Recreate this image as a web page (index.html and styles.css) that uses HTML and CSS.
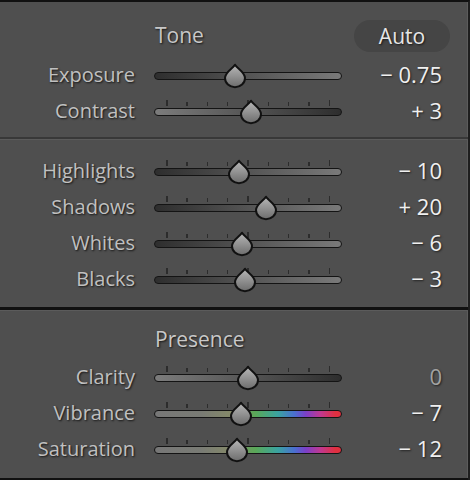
FILE: index.html
```html
<!DOCTYPE html>
<html>
<head>
<meta charset="utf-8">
<link rel="stylesheet" href="styles.css">
</head>
<body>
<div class="panel">
  <section class="sec sec-tone">
    <div class="title-row">
      <span class="title">Tone</span>
      <span class="auto">Auto</span>
    </div>
    <div class="row">
      <span class="label">Exposure</span>
      <div class="slider">
        <div class="ticks none"></div>
        <div class="track tr-dark-light"></div>
        <svg class="thumb" style="left:81px" viewBox="0 0 24 25" width="24" height="25"><defs><linearGradient id="t1" x1="0" y1="0" x2="0" y2="1"><stop offset="0" stop-color="#b8b8b8"/><stop offset="1" stop-color="#6c6c6c"/></linearGradient></defs><path d="M12,1.2 C14,4.8 22,8.5 22,14.5 A10,9.3 0 0 1 2,14.5 C2,8.5 10,4.8 12,1.2 Z" fill="url(#t1)" stroke="#111" stroke-width="2" stroke-linejoin="round"/></svg>
      </div>
      <span class="value">− 0.75</span>
    </div>
    <div class="row">
      <span class="label">Contrast</span>
      <div class="slider">
        <div class="ticks"><i class="big"></i><i></i><i></i><i></i><i class="big"></i><i></i><i></i><i></i><i class="big"></i></div>
        <div class="track tr-light-dark"></div>
        <svg class="thumb" style="left:97px" viewBox="0 0 24 25" width="24" height="25"><defs><linearGradient id="t2" x1="0" y1="0" x2="0" y2="1"><stop offset="0" stop-color="#b8b8b8"/><stop offset="1" stop-color="#6c6c6c"/></linearGradient></defs><path d="M12,1.2 C14,4.8 22,8.5 22,14.5 A10,9.3 0 0 1 2,14.5 C2,8.5 10,4.8 12,1.2 Z" fill="url(#t2)" stroke="#111" stroke-width="2" stroke-linejoin="round"/></svg>
      </div>
      <span class="value">+ 3</span>
    </div>
  </section>

  <section class="sec sec-mid">
    <div class="row">
      <span class="label">Highlights</span>
      <div class="slider">
        <div class="ticks"><i class="big"></i><i></i><i></i><i></i><i class="big"></i><i></i><i></i><i></i><i class="big"></i></div>
        <div class="track tr-dark-light"></div>
        <svg class="thumb" style="left:84.6px" viewBox="0 0 24 25" width="24" height="25"><defs><linearGradient id="t3" x1="0" y1="0" x2="0" y2="1"><stop offset="0" stop-color="#b8b8b8"/><stop offset="1" stop-color="#6c6c6c"/></linearGradient></defs><path d="M12,1.2 C14,4.8 22,8.5 22,14.5 A10,9.3 0 0 1 2,14.5 C2,8.5 10,4.8 12,1.2 Z" fill="url(#t3)" stroke="#111" stroke-width="2" stroke-linejoin="round"/></svg>
      </div>
      <span class="value">− 10</span>
    </div>
    <div class="row">
      <span class="label">Shadows</span>
      <div class="slider">
        <div class="ticks"><i class="big"></i><i></i><i></i><i></i><i class="big"></i><i></i><i></i><i></i><i class="big"></i></div>
        <div class="track tr-dark-light"></div>
        <svg class="thumb" style="left:112px" viewBox="0 0 24 25" width="24" height="25"><defs><linearGradient id="t4" x1="0" y1="0" x2="0" y2="1"><stop offset="0" stop-color="#b8b8b8"/><stop offset="1" stop-color="#6c6c6c"/></linearGradient></defs><path d="M12,1.2 C14,4.8 22,8.5 22,14.5 A10,9.3 0 0 1 2,14.5 C2,8.5 10,4.8 12,1.2 Z" fill="url(#t4)" stroke="#111" stroke-width="2" stroke-linejoin="round"/></svg>
      </div>
      <span class="value">+ 20</span>
    </div>
    <div class="row">
      <span class="label">Whites</span>
      <div class="slider">
        <div class="ticks"><i class="big"></i><i></i><i></i><i></i><i class="big"></i><i></i><i></i><i></i><i class="big"></i></div>
        <div class="track tr-dark-light"></div>
        <svg class="thumb" style="left:88.4px" viewBox="0 0 24 25" width="24" height="25"><defs><linearGradient id="t5" x1="0" y1="0" x2="0" y2="1"><stop offset="0" stop-color="#b8b8b8"/><stop offset="1" stop-color="#6c6c6c"/></linearGradient></defs><path d="M12,1.2 C14,4.8 22,8.5 22,14.5 A10,9.3 0 0 1 2,14.5 C2,8.5 10,4.8 12,1.2 Z" fill="url(#t5)" stroke="#111" stroke-width="2" stroke-linejoin="round"/></svg>
      </div>
      <span class="value">− 6</span>
    </div>
    <div class="row">
      <span class="label">Blacks</span>
      <div class="slider">
        <div class="ticks"><i class="big"></i><i></i><i></i><i></i><i class="big"></i><i></i><i></i><i></i><i class="big"></i></div>
        <div class="track tr-dark-light"></div>
        <svg class="thumb" style="left:91.2px" viewBox="0 0 24 25" width="24" height="25"><defs><linearGradient id="t6" x1="0" y1="0" x2="0" y2="1"><stop offset="0" stop-color="#b8b8b8"/><stop offset="1" stop-color="#6c6c6c"/></linearGradient></defs><path d="M12,1.2 C14,4.8 22,8.5 22,14.5 A10,9.3 0 0 1 2,14.5 C2,8.5 10,4.8 12,1.2 Z" fill="url(#t6)" stroke="#111" stroke-width="2" stroke-linejoin="round"/></svg>
      </div>
      <span class="value">− 3</span>
    </div>
  </section>

  <section class="sec sec-presence">
    <div class="title-row">
      <span class="title">Presence</span>
    </div>
    <div class="row">
      <span class="label">Clarity</span>
      <div class="slider">
        <div class="ticks"><i class="big"></i><i></i><i></i><i></i><i class="big"></i><i></i><i></i><i></i><i class="big"></i></div>
        <div class="track tr-light-dark"></div>
        <svg class="thumb" style="left:94px" viewBox="0 0 24 25" width="24" height="25"><defs><linearGradient id="t7" x1="0" y1="0" x2="0" y2="1"><stop offset="0" stop-color="#b8b8b8"/><stop offset="1" stop-color="#6c6c6c"/></linearGradient></defs><path d="M12,1.2 C14,4.8 22,8.5 22,14.5 A10,9.3 0 0 1 2,14.5 C2,8.5 10,4.8 12,1.2 Z" fill="url(#t7)" stroke="#111" stroke-width="2" stroke-linejoin="round"/></svg>
      </div>
      <span class="value dim">0</span>
    </div>
    <div class="row">
      <span class="label">Vibrance</span>
      <div class="slider">
        <div class="ticks"><i class="big"></i><i></i><i></i><i></i><i class="big"></i><i></i><i></i><i></i><i class="big"></i></div>
        <div class="track tr-color"></div>
        <svg class="thumb" style="left:87.4px" viewBox="0 0 24 25" width="24" height="25"><defs><linearGradient id="t8" x1="0" y1="0" x2="0" y2="1"><stop offset="0" stop-color="#b8b8b8"/><stop offset="1" stop-color="#6c6c6c"/></linearGradient></defs><path d="M12,1.2 C14,4.8 22,8.5 22,14.5 A10,9.3 0 0 1 2,14.5 C2,8.5 10,4.8 12,1.2 Z" fill="url(#t8)" stroke="#111" stroke-width="2" stroke-linejoin="round"/></svg>
      </div>
      <span class="value">− 7</span>
    </div>
    <div class="row">
      <span class="label">Saturation</span>
      <div class="slider">
        <div class="ticks"><i class="big"></i><i></i><i></i><i></i><i class="big"></i><i></i><i></i><i></i><i class="big"></i></div>
        <div class="track tr-color"></div>
        <svg class="thumb" style="left:82.7px" viewBox="0 0 24 25" width="24" height="25"><defs><linearGradient id="t9" x1="0" y1="0" x2="0" y2="1"><stop offset="0" stop-color="#b8b8b8"/><stop offset="1" stop-color="#6c6c6c"/></linearGradient></defs><path d="M12,1.2 C14,4.8 22,8.5 22,14.5 A10,9.3 0 0 1 2,14.5 C2,8.5 10,4.8 12,1.2 Z" fill="url(#t9)" stroke="#111" stroke-width="2" stroke-linejoin="round"/></svg>
      </div>
      <span class="value">− 12</span>
    </div>
  </section>
</div>
</body>
</html>
```

FILE: styles.css
```css
html, body {
  margin: 0;
  padding: 0;
  background: #4f4f4f;
}
body {
  font-family: "Open Sans", "Liberation Sans", sans-serif;
  font-size: 20px;
  color: #c2c2c2;
}
.panel {
  width: 470px;
  height: 480px;
  box-sizing: border-box;
  background: #4f4f4f;
  border-top: 2px solid #111;
  border-right: 2px solid #1e1e1e;
  box-shadow: inset -1px 0 0 #5c5c5c;
  display: flex;
  flex-direction: column;
}
.sec {
  display: flex;
  flex-direction: column;
}
.sec-tone {
  padding-bottom: 7px;
  border-bottom: 2px solid #383838;
}
.sec-mid {
  border-top: 1px solid #5b5b5b;
  padding-top: 14px;
  padding-bottom: 9px;
  border-bottom: 3px solid #111;
}
.sec-presence {
  border-top: 1px solid #5b5b5b;
  flex: 1;
  border-bottom: 2px solid #111;
}
.sec-tone .title-row {
  padding-top: 12px;
  height: 44px;
}
.sec-presence .title-row {
  padding-top: 9px;
  height: 40px;
}
.title-row {
  display: flex;
  align-items: center;
  padding-left: 155px;
  padding-right: 18px;
}
.title {
  flex: 1;
  font-size: 21px;
  color: #c8c8c8;
  text-shadow: 1px 1px 2px rgba(0, 0, 0, 0.75);
  padding-bottom: 2px;
}
.auto {
  width: 96px;
  height: 32px;
  border-radius: 16px;
  background: #454545;
  color: #e6e6e6;
  font-size: 21px;
  display: flex;
  align-items: center;
  justify-content: center;
  text-shadow: 1px 1px 2px rgba(0, 0, 0, 0.7);
  box-sizing: border-box;
  padding-bottom: 1px;
}
.row {
  height: 36px;
  display: flex;
  align-items: center;
}
.label {
  width: 135px;
  text-align: right;
  color: #c0c0c0;
  text-shadow: 1px 1px 2px rgba(0, 0, 0, 0.75);
  padding-bottom: 4px;
}
.slider {
  position: relative;
  width: 188px;
  height: 36px;
  margin-left: 19px;
  display: flex;
  flex-direction: column;
  justify-content: center;
  padding-bottom: 8px;
  box-sizing: border-box;
}
.ticks {
  height: 6px;
  margin-bottom: 2px;
  display: flex;
  justify-content: space-between;
  align-items: flex-end;
  padding: 0 12px;
}
.ticks i {
  display: block;
  width: 1.5px;
  height: 4px;
  background: #2c2c2c;
}
.ticks i.big {
  height: 6px;
}
.track {
  height: 8px;
  box-sizing: border-box;
  border: 1.5px solid #141414;
  border-radius: 4px;
}
.tr-dark-light {
  background: linear-gradient(to right, #2e2e2e, #7a7a7a);
}
.tr-light-dark {
  background: linear-gradient(to right, #7c7c7c, #2e2e2e);
}
.tr-color {
  background: linear-gradient(to right, #777 0%, #797b74 25%, #858a68 42%, #5aa858 54%, #3aa3a0 66%, #4a6fd0 75%, #7a40c8 81%, #c03890 89%, #e03040 97%);
}
.thumb {
  position: absolute;
  top: 50%;
  transform: translate(-50%, -50%);
  overflow: visible;
}
.value {
  width: 100px;
  text-align: right;
  font-size: 22px;
  color: #f0f0f0;
  text-shadow: 1px 1px 2px rgba(0, 0, 0, 0.6);
  padding-bottom: 5px;
}
.value.dim {
  color: #a2a2a2;
}
```
